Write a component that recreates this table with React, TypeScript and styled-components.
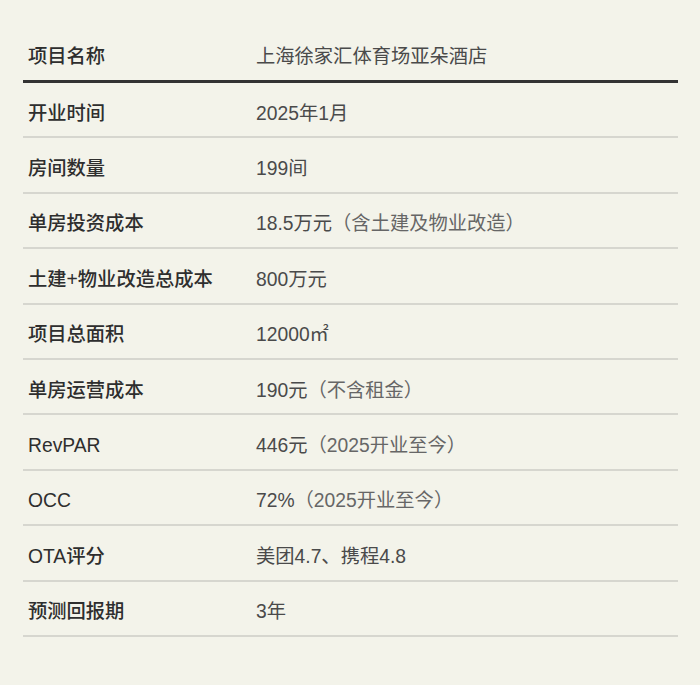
import React from "react";
import styled, { createGlobalStyle } from "styled-components";

const GlobalStyle = createGlobalStyle`
  html, body {
    margin: 0;
    padding: 0;
    background: #f3f3ea;
  }
  body {
    font-family: "Liberation Sans", "Noto Sans CJK SC", sans-serif;
  }
`;

type Row = { label: string; value: string; note?: string };

const rows: Row[] = [
  { label: "开业时间", value: "2025年1月" },
  { label: "房间数量", value: "199间" },
  { label: "单房投资成本", value: "18.5万元", note: "（含土建及物业改造）" },
  { label: "土建+物业改造总成本", value: "800万元" },
  { label: "项目总面积", value: "12000㎡" },
  { label: "单房运营成本", value: "190元", note: "（不含租金）" },
  { label: "RevPAR", value: "446元", note: "（2025开业至今）" },
  { label: "OCC", value: "72%", note: "（2025开业至今）" },
  { label: "OTA评分", value: "美团4.7、携程4.8" },
  { label: "预测回报期", value: "3年" },
];

export default function App() {
  return (
    <>
      <GlobalStyle />
      <Page>
        <Table>
          <HeadCell>项目名称</HeadCell>
          <HeadCell $value>上海徐家汇体育场亚朵酒店</HeadCell>
          {rows.map((r) => (
            <React.Fragment key={r.label}>
              <LabelCell>{r.label}</LabelCell>
              <ValueCell>
                {r.value}
                {r.note && <Note>{r.note}</Note>}
              </ValueCell>
            </React.Fragment>
          ))}
        </Table>
      </Page>
    </>
  );
}

const Page = styled.div`
  width: 700px;
  height: 685px;
  padding: 26px 22px 0 23px;
  box-sizing: border-box;
`;

const Table = styled.div`
  display: grid;
  grid-template-columns: 229px 1fr;
`;

const Cell = styled.div`
  display: flex;
  align-items: center;
  box-sizing: border-box;
  height: 55.4px;
  padding: 7px 0 0 5px;
  font-size: 19.3px;
  line-height: 1;
  white-space: nowrap;
  border-bottom: 2px solid #d6d6cf;
`;

const HeadCell = styled(Cell)<{ $value?: boolean }>`
  height: 57px;
  border-bottom: 3.5px solid #333;
  color: ${(p) => (p.$value ? "#4a4a4a" : "#2e2e2e")};
  font-weight: ${(p) => (p.$value ? 400 : 500)};
  padding-left: ${(p) => (p.$value ? "4px" : "5px")};
`;

const LabelCell = styled(Cell)`
  color: #2e2e2e;
  font-weight: 500;
`;

const ValueCell = styled(Cell)`
  color: #4a4a4a;
  font-weight: 400;
  padding-left: 4px;
`;

const Note = styled.span`
  color: #666;
`;
